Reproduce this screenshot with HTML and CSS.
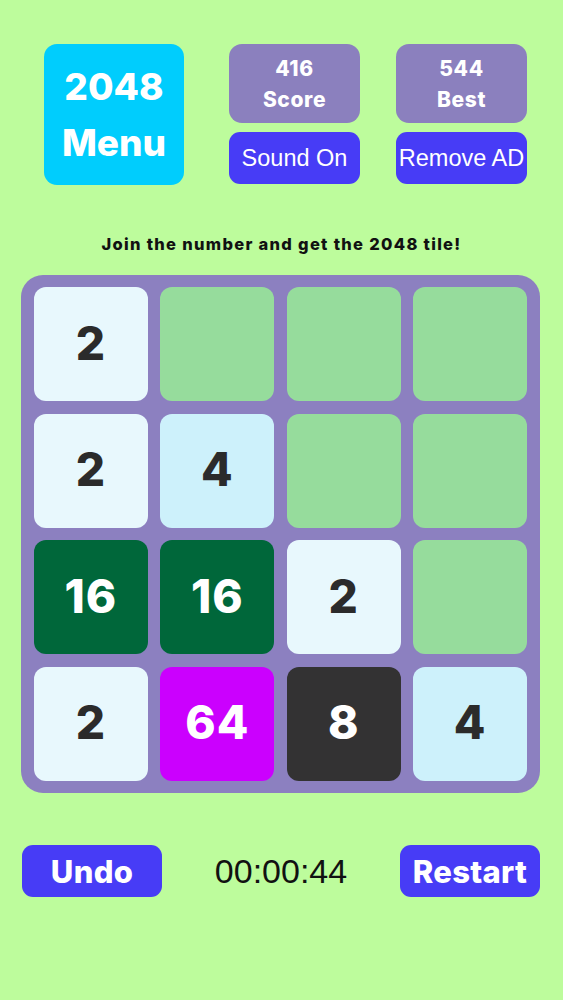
FILE: index.html
```html
<!DOCTYPE html>
<html>
<head>
<meta charset="utf-8">
<link rel="stylesheet" href="styles.css">
</head>
<body>
<div class="page">
  <div class="top">
    <div class="menu">2048<br>Menu</div>
    <div class="col">
      <div class="stat">416<br>Score</div>
      <div class="btn">Sound On</div>
    </div>
    <div class="col col-right">
      <div class="stat">544<br>Best</div>
      <div class="btn">Remove AD</div>
    </div>
  </div>
  <div class="hint">Join the number and get the 2048 tile!</div>
  <div class="board">
    <div class="tile t2">2</div>
    <div class="tile empty"></div>
    <div class="tile empty"></div>
    <div class="tile empty"></div>
    <div class="tile t2">2</div>
    <div class="tile t4">4</div>
    <div class="tile empty"></div>
    <div class="tile empty"></div>
    <div class="tile t16">16</div>
    <div class="tile t16">16</div>
    <div class="tile t2">2</div>
    <div class="tile empty"></div>
    <div class="tile t2">2</div>
    <div class="tile t64">64</div>
    <div class="tile t8">8</div>
    <div class="tile t4">4</div>
  </div>
  <div class="bottom">
    <div class="action">Undo</div>
    <div class="timer">00:00:44</div>
    <div class="action">Restart</div>
  </div>
</div>
</body>
</html>
```

FILE: styles.css
```css
html, body {
  margin: 0;
  padding: 0;
  background: #bdfc9c;
}
.page {
  width: 563px;
  height: 1000px;
  font-family: Inter, Lato, "Open Sans", sans-serif;
}
.top {
  display: flex;
  padding: 44px 0 0 44px;
}
.menu {
  width: 140px;
  height: 141px;
  background: #00cdfd;
  border-radius: 13px;
  color: #fff;
  font-weight: 800;
  font-size: 37px;
  line-height: 56px;
  display: flex;
  align-items: center;
  justify-content: center;
  text-align: center;
}
.col {
  display: flex;
  flex-direction: column;
  gap: 9px;
  margin-left: 45px;
  width: 131px;
}
.col-right {
  margin-left: 36px;
}
.stat {
  height: 79px;
  border-radius: 13px;
  background: #8b80be;
  color: #fff;
  font-weight: 800;
  font-size: 21px;
  letter-spacing: 0.6px;
  line-height: 31px;
  display: flex;
  align-items: center;
  justify-content: center;
  text-align: center;
}
.btn {
  height: 52px;
  border-radius: 11px;
  background: #473cf6;
  color: #fff;
  font-family: "Liberation Sans", Arial, sans-serif;
  font-size: 23.5px;
  display: flex;
  align-items: center;
  justify-content: center;
  white-space: nowrap;
}
.hint {
  margin-top: 49px;
  text-align: center;
  font-weight: 800;
  font-size: 16.5px;
  letter-spacing: 1.3px;
  line-height: 20px;
  color: #111;
}
.board {
  margin: 21px 0 0 21px;
  width: 519px;
  height: 518px;
  box-sizing: border-box;
  padding: 12px 13px;
  background: #8c80c0;
  border-radius: 22px;
  display: grid;
  grid-template-columns: repeat(4, 1fr);
  grid-template-rows: repeat(4, 1fr);
  column-gap: 12.5px;
  row-gap: 12.5px;
}
.tile {
  border-radius: 12px;
  display: flex;
  align-items: center;
  justify-content: center;
  font-weight: 800;
  font-size: 46px;
  letter-spacing: 1px;
  padding-bottom: 3px;
  color: #2b2b2b;
}
.empty { background: #96dc9c; }
.t2 { background: #e8f8fd; }
.t4 { background: #cdf1fb; }
.t8 { background: #333233; color: #fff; }
.t16 { background: #00673a; color: #fff; }
.t64 { background: #cb00fe; color: #fff; }
.bottom {
  display: flex;
  align-items: center;
  justify-content: space-between;
  margin: 52px 23px 0 22px;
}
.action {
  width: 140px;
  height: 52px;
  border-radius: 11px;
  background: #473cf6;
  color: #fff;
  font-weight: 800;
  font-size: 31px;
  letter-spacing: 0.3px;
  display: flex;
  align-items: center;
  justify-content: center;
}
.timer {
  font-family: "Liberation Sans", Arial, sans-serif;
  font-size: 34px;
  color: #111;
}
```
